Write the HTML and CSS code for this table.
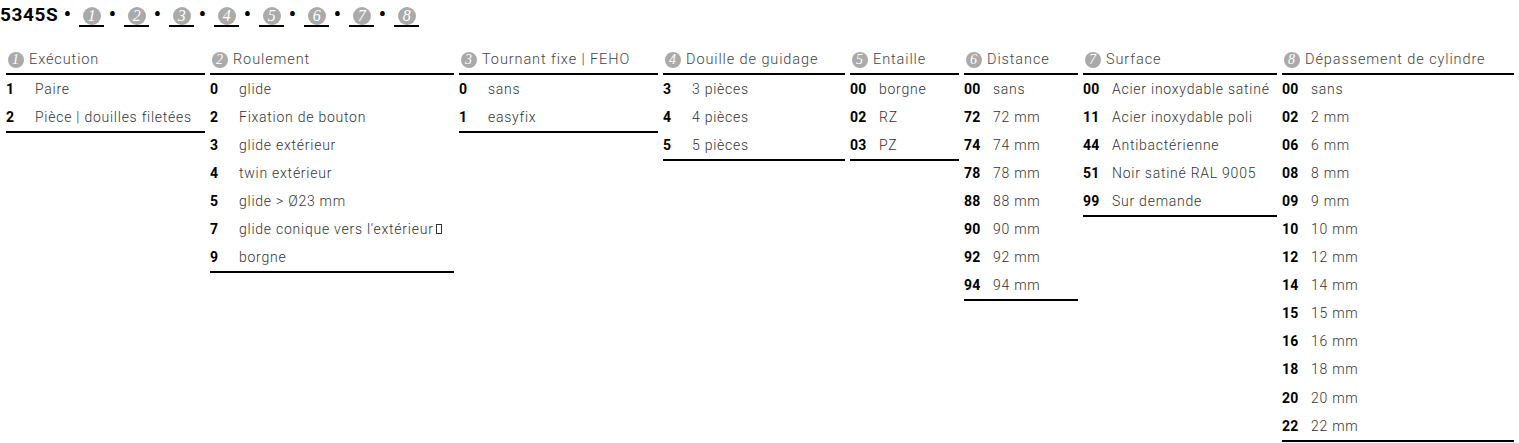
FILE: index.html
```html
<!DOCTYPE html>
<html lang="fr">
<head>
<meta charset="utf-8">
<title>5345S</title>
<link rel="stylesheet" href="styles.css">
</head>
<body>
<div class="code-line">
  <span class="model">5345S</span>
  <span class="dot">•</span><span class="slot"><span class="badge">1</span></span>
  <span class="dot">•</span><span class="slot"><span class="badge">2</span></span>
  <span class="dot">•</span><span class="slot"><span class="badge">3</span></span>
  <span class="dot">•</span><span class="slot"><span class="badge">4</span></span>
  <span class="dot">•</span><span class="slot"><span class="badge">5</span></span>
  <span class="dot">•</span><span class="slot"><span class="badge">6</span></span>
  <span class="dot">•</span><span class="slot"><span class="badge">7</span></span>
  <span class="dot">•</span><span class="slot"><span class="badge">8</span></span>
</div>
<div class="tables">
  <div class="col c1">
    <div class="col-head"><span class="badge sm">1</span>Exécution</div>
    <div class="rows">
      <div class="row"><span class="code">1</span><span class="label">Paire</span></div>
      <div class="row"><span class="code">2</span><span class="label">Pièce | douilles filetées</span></div>
    </div>
  </div>
  <div class="col c2">
    <div class="col-head"><span class="badge sm">2</span>Roulement</div>
    <div class="rows">
      <div class="row"><span class="code">0</span><span class="label">glide</span></div>
      <div class="row"><span class="code">2</span><span class="label">Fixation de bouton</span></div>
      <div class="row"><span class="code">3</span><span class="label">glide extérieur</span></div>
      <div class="row"><span class="code">4</span><span class="label">twin extérieur</span></div>
      <div class="row"><span class="code">5</span><span class="label">glide &gt; Ø23 mm</span></div>
      <div class="row"><span class="code">7</span><span class="label">glide conique vers l'extérieur<span class="box"></span></span></div>
      <div class="row"><span class="code">9</span><span class="label">borgne</span></div>
    </div>
  </div>
  <div class="col c3">
    <div class="col-head"><span class="badge sm">3</span>Tournant fixe | FEHO</div>
    <div class="rows">
      <div class="row"><span class="code">0</span><span class="label">sans</span></div>
      <div class="row"><span class="code">1</span><span class="label">easyfix</span></div>
    </div>
  </div>
  <div class="col c4">
    <div class="col-head"><span class="badge sm">4</span>Douille de guidage</div>
    <div class="rows">
      <div class="row"><span class="code">3</span><span class="label">3 pièces</span></div>
      <div class="row"><span class="code">4</span><span class="label">4 pièces</span></div>
      <div class="row"><span class="code">5</span><span class="label">5 pièces</span></div>
    </div>
  </div>
  <div class="col c5">
    <div class="col-head"><span class="badge sm">5</span>Entaille</div>
    <div class="rows">
      <div class="row"><span class="code">00</span><span class="label">borgne</span></div>
      <div class="row"><span class="code">02</span><span class="label">RZ</span></div>
      <div class="row"><span class="code">03</span><span class="label">PZ</span></div>
    </div>
  </div>
  <div class="col c6">
    <div class="col-head"><span class="badge sm">6</span>Distance</div>
    <div class="rows">
      <div class="row"><span class="code">00</span><span class="label">sans</span></div>
      <div class="row"><span class="code">72</span><span class="label">72 mm</span></div>
      <div class="row"><span class="code">74</span><span class="label">74 mm</span></div>
      <div class="row"><span class="code">78</span><span class="label">78 mm</span></div>
      <div class="row"><span class="code">88</span><span class="label">88 mm</span></div>
      <div class="row"><span class="code">90</span><span class="label">90 mm</span></div>
      <div class="row"><span class="code">92</span><span class="label">92 mm</span></div>
      <div class="row"><span class="code">94</span><span class="label">94 mm</span></div>
    </div>
  </div>
  <div class="col c7">
    <div class="col-head"><span class="badge sm">7</span>Surface</div>
    <div class="rows">
      <div class="row"><span class="code">00</span><span class="label">Acier inoxydable satiné</span></div>
      <div class="row"><span class="code">11</span><span class="label">Acier inoxydable poli</span></div>
      <div class="row"><span class="code">44</span><span class="label">Antibactérienne</span></div>
      <div class="row"><span class="code">51</span><span class="label">Noir satiné RAL 9005</span></div>
      <div class="row"><span class="code">99</span><span class="label">Sur demande</span></div>
    </div>
  </div>
  <div class="col c8">
    <div class="col-head"><span class="badge sm">8</span>Dépassement de cylindre</div>
    <div class="rows">
      <div class="row"><span class="code">00</span><span class="label">sans</span></div>
      <div class="row"><span class="code">02</span><span class="label">2 mm</span></div>
      <div class="row"><span class="code">06</span><span class="label">6 mm</span></div>
      <div class="row"><span class="code">08</span><span class="label">8 mm</span></div>
      <div class="row"><span class="code">09</span><span class="label">9 mm</span></div>
      <div class="row"><span class="code">10</span><span class="label">10 mm</span></div>
      <div class="row"><span class="code">12</span><span class="label">12 mm</span></div>
      <div class="row"><span class="code">14</span><span class="label">14 mm</span></div>
      <div class="row"><span class="code">15</span><span class="label">15 mm</span></div>
      <div class="row"><span class="code">16</span><span class="label">16 mm</span></div>
      <div class="row"><span class="code">18</span><span class="label">18 mm</span></div>
      <div class="row"><span class="code">20</span><span class="label">20 mm</span></div>
      <div class="row"><span class="code">22</span><span class="label">22 mm</span></div>
    </div>
  </div>
</div>
</body>
</html>
```

FILE: styles.css
```css
* { box-sizing: border-box; }
html, body { margin: 0; padding: 0; background: #fff; }
body {
  font-family: Roboto, "Liberation Sans", sans-serif;
  color: #333;
  width: 1519px;
  height: 443px;
  overflow: hidden;
}

.code-line {
  height: 32px;
  display: flex;
  align-items: flex-start;
  padding-top: 5px;
}
.model {
  font-weight: 700;
  font-size: 19px;
  line-height: 19px;
  color: #000;
  letter-spacing: 0.6px;
  margin-right: 5px;
}
.dot {
  font-size: 20px;
  line-height: 19px;
  color: #000;
  font-weight: 700;
  width: 8px;
  text-align: center;
  margin-right: 8px;
}
.slot {
  width: 25px;
  height: 22px;
  border-bottom: 2px solid #000;
  display: flex;
  justify-content: center;
  padding-top: 2px;
  margin-right: 4px;
}
.badge {
  width: 18px;
  height: 18px;
  border-radius: 50%;
  background: #aaa;
  color: #fff;
  font-family: "Liberation Serif", "DejaVu Serif", serif;
  font-style: italic;
  font-size: 16px;
  line-height: 18px;
  text-align: center;
  flex: none;
  display: inline-block;
}
.badge.sm {
  width: 16px;
  height: 16px;
  font-size: 14px;
  line-height: 16px;
  margin-left: 2px;
  margin-right: 5px;
}

.tables {
  display: flex;
  align-items: flex-start;
  gap: 5px;
  padding-left: 6px;
}
.col { flex: none; }
.c1 { width: 199px; }
.c2 { width: 244px; }
.c3 { width: 199px; }
.c4 { width: 182px; }
.c5 { width: 109px; }
.c6 { width: 114px; }
.c7 { width: 194px; }
.c8 { width: 232px; }

.col-head {
  height: 43px;
  padding-top: 15px;
  border-bottom: 2px solid #000;
  display: flex;
  align-items: center;
  font-size: 14.5px;
  font-weight: 300;
  letter-spacing: 0.9px;
  line-height: 20px;
  color: #444;
  white-space: nowrap;
}
.rows { border-bottom: 2px solid #000; }
.row {
  height: 28.05px;
  display: flex;
  align-items: center;
  font-size: 14px;
  line-height: 28px;
}
.code {
  width: 29px;
  flex: none;
  font-weight: 700;
  color: #000;
  letter-spacing: 0.2px;
}
.label {
  font-weight: 300;
  color: #333;
  letter-spacing: 0.75px;
  white-space: nowrap;
  display: inline-flex;
  align-items: center;
}
.box {
  display: inline-block;
  width: 6px;
  height: 10px;
  border: 1px solid #333;
  margin-left: 2px;
}
```
